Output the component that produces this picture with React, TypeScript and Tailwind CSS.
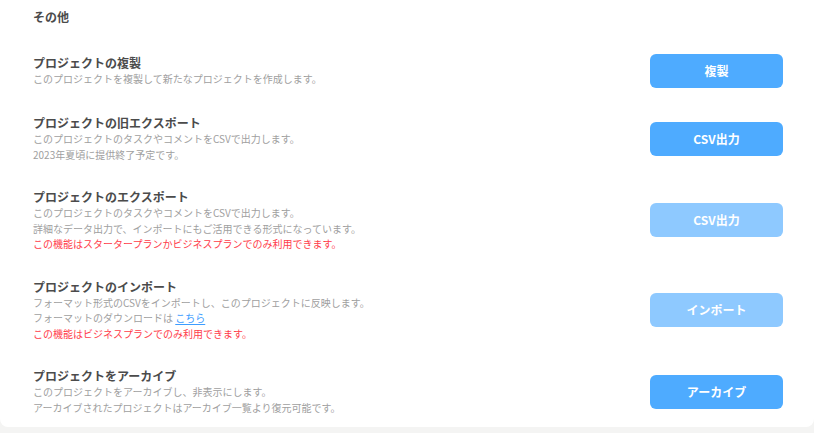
import type { ReactNode } from 'react';

interface SettingRow {
  title: string;
  lines: ReactNode[];
  notice?: string;
  button: string;
  disabled?: boolean;
}

const rows: SettingRow[] = [
  {
    title: 'プロジェクトの複製',
    lines: ['このプロジェクトを複製して新たなプロジェクトを作成します。'],
    button: '複製',
  },
  {
    title: 'プロジェクトの旧エクスポート',
    lines: ['このプロジェクトのタスクやコメントをCSVで出力します。', '2023年夏頃に提供終了予定です。'],
    button: 'CSV出力',
  },
  {
    title: 'プロジェクトのエクスポート',
    lines: [
      'このプロジェクトのタスクやコメントをCSVで出力します。',
      '詳細なデータ出力で、インポートにもご活用できる形式になっています。',
    ],
    notice: 'この機能はスタータープランかビジネスプランでのみ利用できます。',
    button: 'CSV出力',
    disabled: true,
  },
  {
    title: 'プロジェクトのインポート',
    lines: [
      'フォーマット形式のCSVをインポートし、このプロジェクトに反映します。',
      <>
        フォーマットのダウンロードは{' '}
        <a href="#" className="text-[#3d9dff] underline underline-offset-2">
          こちら
        </a>
      </>,
    ],
    notice: 'この機能はビジネスプランでのみ利用できます。',
    button: 'インポート',
    disabled: true,
  },
  {
    title: 'プロジェクトをアーカイブ',
    lines: ['このプロジェクトをアーカイブし、非表示にします。', 'アーカイブされたプロジェクトはアーカイブ一覧より復元可能です。'],
    button: 'アーカイブ',
  },
];

function Row({ row }: { row: SettingRow }) {
  return (
    <div className="flex items-center justify-between">
      <div>
        <p className="text-[12px] leading-4 font-bold text-[#4b4b4b]">{row.title}</p>
        {row.lines.map((line, i) => (
          <p key={i} className="text-[10px] leading-[15.5px] text-[#a0a0a0]">
            {line}
          </p>
        ))}
        {row.notice && <p className="text-[10px] leading-[15.5px] text-[#ff3c4a]">{row.notice}</p>}
      </div>
      <button
        className={`w-[133px] h-[34px] rounded-md text-[12px] font-bold text-white ${
          row.disabled ? 'bg-[#8ec9ff]' : 'bg-[#4eabff]'
        }`}
      >
        {row.button}
      </button>
    </div>
  );
}

export default function App() {
  return (
    <div
      className="w-[814px] h-[433px] bg-[#f4f4f3] overflow-hidden"
      style={{ fontFamily: '"Noto Sans CJK JP", "Noto Sans", sans-serif' }}
    >
      <section className="bg-white rounded-b-lg pl-[33px] pr-[31px] pt-[9px] h-[427px]">
        <h2 className="text-[12px] leading-4 font-bold text-[#4b4b4b]">その他</h2>
        <div className="mt-[29px] flex flex-col gap-[27px]">
          {rows.map((row) => (
            <Row key={row.title} row={row} />
          ))}
        </div>
      </section>
    </div>
  );
}
